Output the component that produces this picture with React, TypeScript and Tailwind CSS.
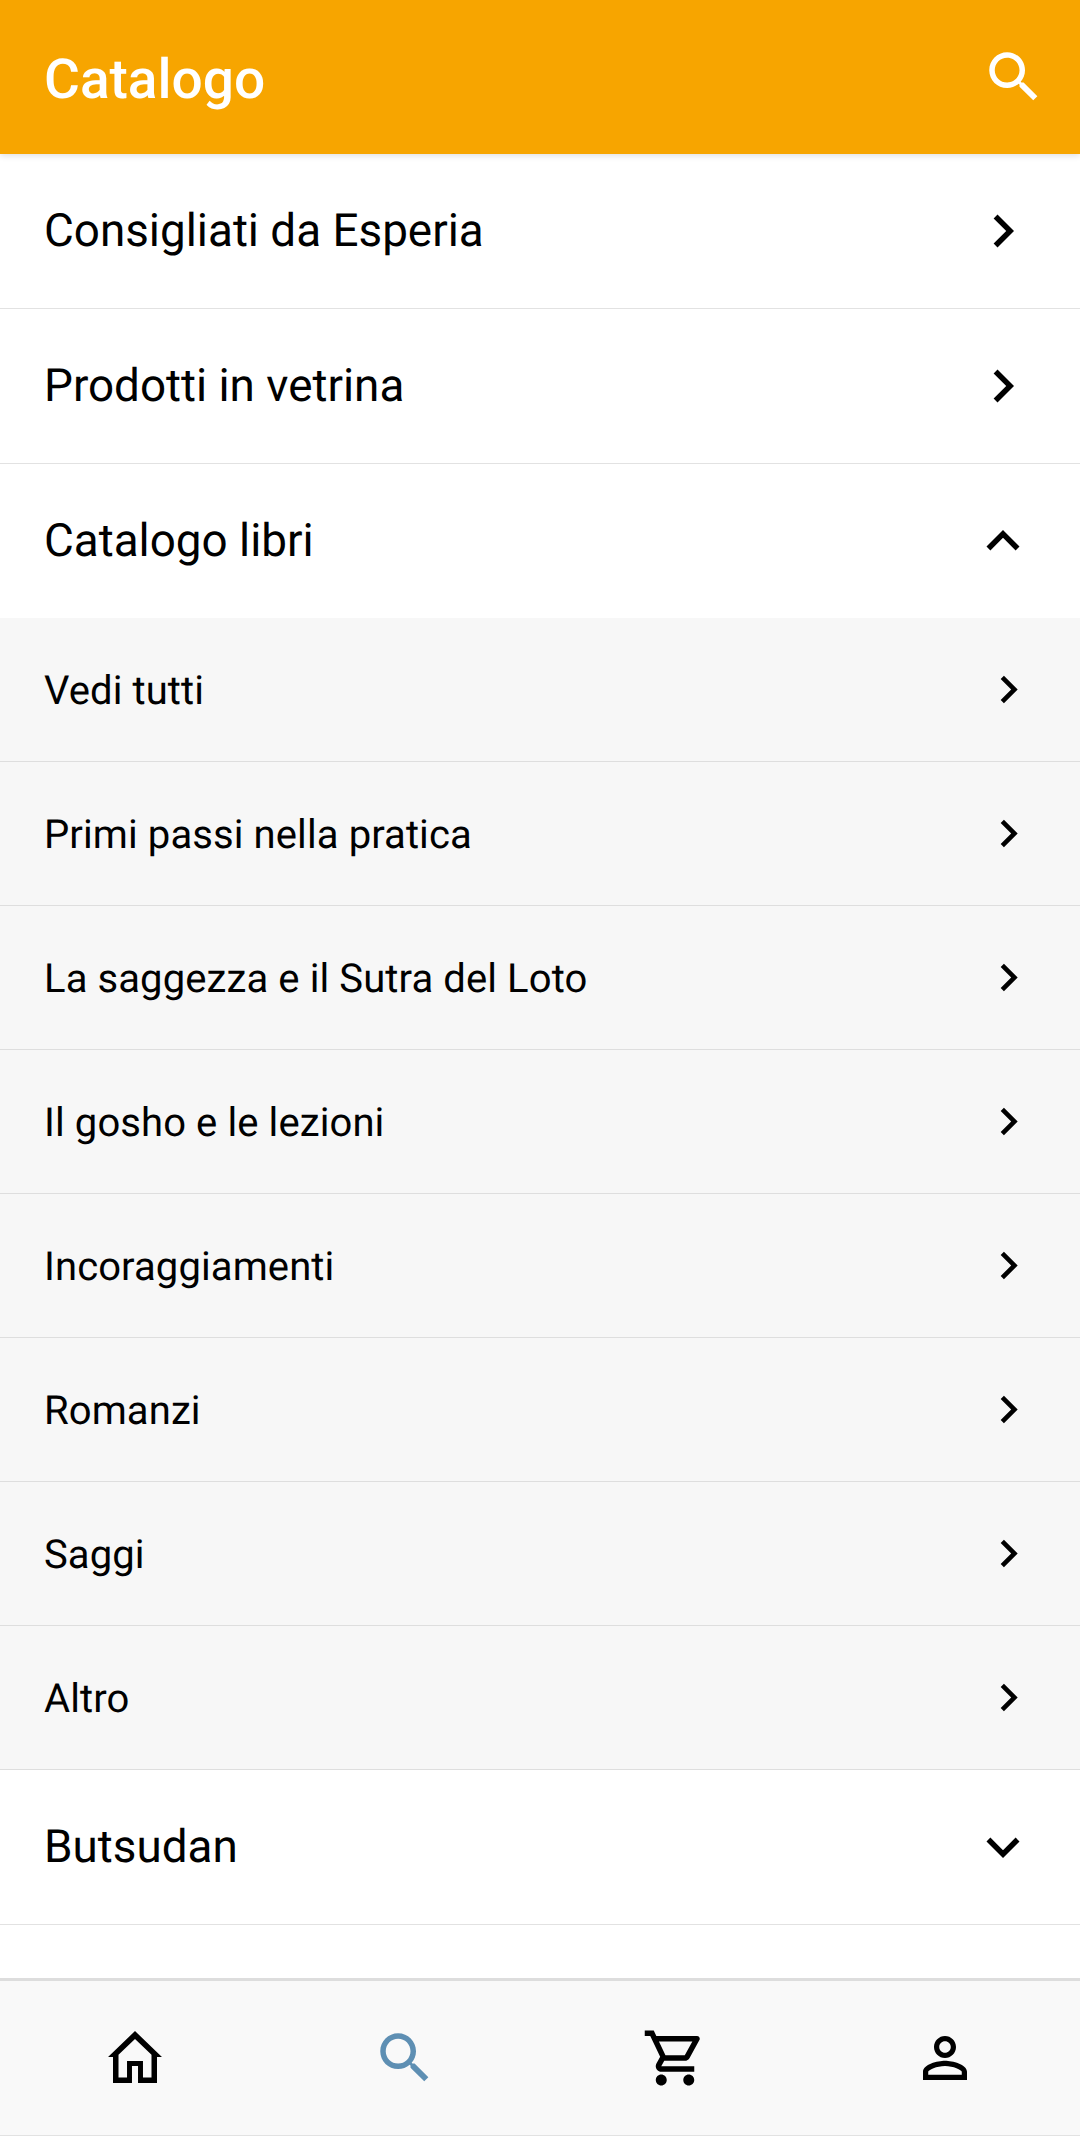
const CHEVRON = "M10 6L8.59 7.41 13.17 12l-4.58 4.59L10 18l6-6z";
const LESS = "M12 8l-6 6 1.41 1.41L12 10.83l4.59 4.58L18 14z";
const MORE = "M16.59 8.59L12 13.17 7.41 8.59 6 10l6 6 6-6z";
const SEARCH = "M15.5 14h-.79l-.28-.27C15.41 12.59 16 11.11 16 9.5 16 5.91 13.09 3 9.5 3S3 5.91 3 9.5 5.91 16 9.5 16c1.61 0 3.09-.59 4.23-1.57l.27.28v.79l5 4.99L20.49 19l-4.99-5zm-6 0C7.01 14 5 11.99 5 9.5S7.01 5 9.5 5 14 7.01 14 9.5 11.99 14 9.5 14z";
const HOME = "M12 2.2L2.2 11.6H4V21.1H10.9V14.9H13.1V21.1H20V11.6H21.8ZM12 5.1L18 10.8V19.1H14.9V13.1H9.1V19.1H6V10.8Z";
const CART = "M15.55 13c.75 0 1.41-.41 1.75-1.03l3.58-6.49c.37-.66-.11-1.48-.87-1.48H5.21l-.94-2H1v2h2l3.6 7.59-1.35 2.44C4.52 15.37 5.48 17 7 17h12v-2H7l1.1-2h7.45zM6.16 6h12.15l-2.76 5H8.53L6.16 6zM7 18c-1.1 0-1.99.9-1.99 2S5.9 22 7 22s2-.9 2-2-.9-2-2-2zm10 0c-1.1 0-1.99.9-1.99 2s.89 2 1.99 2 2-.9 2-2-.9-2-2-2z";
const PERSON = "M12 5.9c1.16 0 2.1.94 2.1 2.1s-.94 2.1-2.1 2.1S9.9 9.16 9.9 8s.94-2.1 2.1-2.1m0 9c2.97 0 6.1 1.46 6.1 2.1v1.1H5.9V17c0-.64 3.13-2.1 6.1-2.1M12 4C9.79 4 8 5.79 8 8s1.79 4 4 4 4-1.79 4-4-1.79-4-4-4zm0 9c-2.67 0-8 1.34-8 4v3h16v-3c0-2.66-5.33-4-8-4z";

function Icon({ d, className }: { d: string; className: string }) {
  return (
    <svg viewBox="0 0 24 24" fill="currentColor" className={className}>
      <path d={d} fillRule="evenodd" />
    </svg>
  );
}

function MainRow({ label, icon }: { label: string; icon: string }) {
  return (
    <div className="h-[155px] shrink-0 flex items-center justify-between pl-[44px] pr-[44px] bg-white border-b border-[#e2e2e2]">
      <span className="text-[45.8px] leading-none text-black mt-[1px]">{label}</span>
      <Icon d={icon} className="w-[66px] h-[66px] text-black" />
    </div>
  );
}

function SubRow({ label }: { label: string }) {
  return (
    <div className="h-[144px] shrink-0 flex items-center justify-between pl-[44px] pr-[44px] bg-[#f7f7f7] border-b border-[#dedede]">
      <span className="text-[40px] leading-none tracking-[0.1px] text-black mt-[2px]">{label}</span>
      <Icon d={CHEVRON} className="w-[55px] h-[55px] text-black" />
    </div>
  );
}

const subs = [
  "Vedi tutti",
  "Primi passi nella pratica",
  "La saggezza e il Sutra del Loto",
  "Il gosho e le lezioni",
  "Incoraggiamenti",
  "Romanzi",
  "Saggi",
  "Altro",
];

export default function App() {
  return (
    <div className="w-[1080px] h-[2138px] flex flex-col overflow-hidden bg-white font-['Roboto',sans-serif] [text-rendering:geometricPrecision]">
      <header className="relative z-10 h-[154px] shrink-0 flex items-center justify-between pl-[44px] pr-[33px] bg-[#f7a500] shadow-[0_2px_6px_rgba(0,0,0,0.12)]">
        <h1 className="text-[55px] leading-none font-medium text-white pt-[6px]">Catalogo</h1>
        <Icon d={SEARCH} className="w-[66px] h-[66px] text-white" />
      </header>
      <main className="flex-1 flex flex-col min-h-0">
        <MainRow label="Consigliati da Esperia" icon={CHEVRON} />
        <MainRow label="Prodotti in vetrina" icon={CHEVRON} />
        <div className="h-[154px] shrink-0 flex items-center justify-between pl-[44px] pr-[44px] bg-white">
          <span className="text-[45.8px] leading-none text-black mt-[1px]">Catalogo libri</span>
          <Icon d={LESS} className="w-[66px] h-[66px] text-black" />
        </div>
        {subs.map((s) => (
          <SubRow key={s} label={s} />
        ))}
        <MainRow label="Butsudan" icon={MORE} />
      </main>
      <nav className="h-[157px] shrink-0 grid grid-cols-4 items-center justify-items-center bg-[#f9f9f9] border-t-[3px] border-[#dddddd]">
        <Icon d={HOME} className="w-[66px] h-[66px] text-black" />
        <Icon d={SEARCH} className="w-[66px] h-[66px] text-[#5e8fb3]" />
        <Icon d={CART} className="w-[66px] h-[66px] text-black" />
        <Icon d={PERSON} className="w-[66px] h-[66px] text-black" />
      </nav>
      <div className="h-[3px] shrink-0 bg-white border-t border-[#e2e2e2]" />
    </div>
  );
}
